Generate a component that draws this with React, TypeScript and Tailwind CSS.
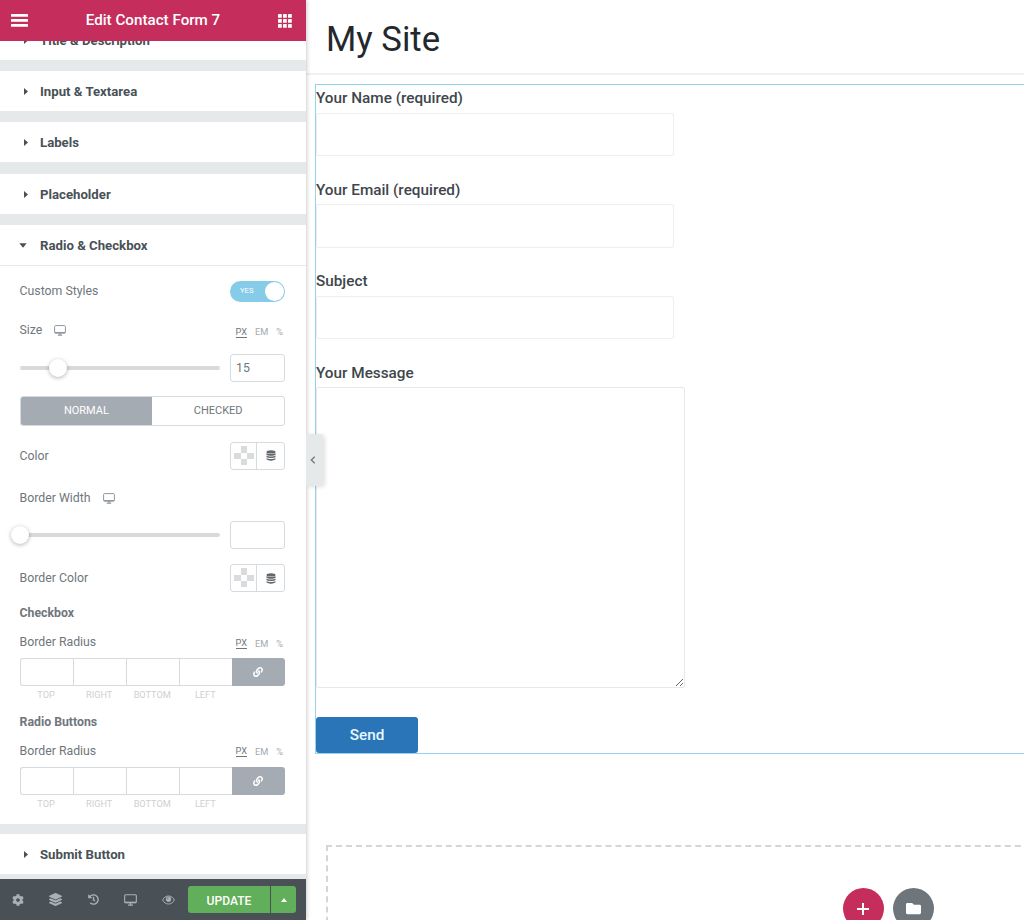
import type { ReactNode } from 'react'
import { FaCog, FaFolder, FaHistory, FaLayerGroup, FaLink } from 'react-icons/fa'

function DesktopIcon({ className }: { className: string }) {
  return (
    <svg viewBox="0 0 12 11" className={className} fill="none" stroke="currentColor">
      <rect x="0.6" y="0.6" width="10.8" height="7.4" rx="0.9" strokeWidth="1" />
      <path d="M0.8 7.7h10.4" strokeWidth="1.4" />
      <path d="M6 8v2M3.8 10.2h4.4" strokeWidth="1.2" />
    </svg>
  )
}

function DatabaseIcon() {
  return (
    <svg viewBox="0 0 10 11" className="h-[11px] w-[10px]" fill="#60676d">
      <ellipse cx="5" cy="1.9" rx="4.5" ry="1.7" />
      <path d="M.5 3.1c1.600 1.300 7.400 1.300 9 0v1.600c-1.600 1.300-7.400 1.300-9 0zM.5 5.500c1.600 1.300 7.400 1.300 9 0v1.600c-1.600 1.300-7.400 1.300-9 0zM.5 7.900c1.600 1.300 7.400 1.300 9 0v1.400c-1.600 1.800-7.400 1.800-9 0z" />
    </svg>
  )
}

function EyeIcon() {
  return (
    <svg viewBox="0 0 13 10" className="h-[10px] w-[13px]" fill="none" stroke="currentColor">
      <path d="M.6 5C2 2.3 4 1 6.500 1S11 2.300 12.400 5C11 7.700 9 9 6.500 9S2 7.700.6 5z" strokeWidth="1" />
      <circle cx="6.500" cy="4.300" r="2.700" fill="currentColor" stroke="none" />
      <path d="M5.200 4.200c0-.8.5-1.300 1.300-1.300" stroke="#495157" strokeWidth=".7" />
    </svg>
  )
}

function SectionTitle({ title, open = false }: { title: string; open?: boolean }) {
  return (
    <div className="flex h-[40px] shrink-0 items-center bg-white pl-[19px]">
      <span className="flex w-[21px] shrink-0">
        {open ? (
          <svg viewBox="0 0 8 5" className="h-[5px] w-[8px]" fill="#495157">
            <path d="M.3.3h7.400L4 4.700z" />
          </svg>
        ) : (
          <svg viewBox="0 0 4 7" className="ml-[5px] h-[7px] w-[4px]" fill="#495157">
            <path d="M0 0v7l4-3.500z" />
          </svg>
        )}
      </span>
      <h2 className="pt-px text-[13.2px] font-bold text-[#495157]">{title}</h2>
    </div>
  )
}

function Units() {
  return (
    <div className="flex items-center gap-[8px] pr-[2px] text-[9.2px] leading-[10px] text-[#a4a9ad]">
      <span className="border-b border-[#6f767c] text-[#6f767c]">PX</span>
      <span>EM</span>
      <span>%</span>
    </div>
  )
}

function Slider({ value, position }: { value: string; position: number }) {
  return (
    <>
      <div className="relative h-[4px] w-[200px] rounded-full bg-[#d8d9da]">
        <span
          className="absolute top-[-7px] h-[18px] w-[18px] -translate-x-1/2 rounded-full bg-white shadow-[0_1px_4px_rgba(0,0,0,0.3)]"
          style={{ left: position }}
        />
      </div>
      <div className="flex h-[28px] w-[55px] items-center rounded-[3px] border border-[#d5dadf] pt-px pl-[5px] text-[12.3px] text-[#6f767c]">
        {value}
      </div>
    </>
  )
}

function ColorPicker() {
  return (
    <div className="flex h-[28px] w-[55px] rounded-[3px] border border-[#d5dadf]">
      <div className="flex flex-1 items-center justify-center border-r border-[#d5dadf]">
        <svg viewBox="0 0 20 20" className="h-[20px] w-[20px]" fill="#d9dbdc">
          <path d="M7 0h6v7H7zM0 7h7v6H0zM13 7h7v6h-7zM7 13h6v6H7z" />
        </svg>
      </div>
      <div className="flex w-[27px] items-center justify-center">
        <DatabaseIcon />
      </div>
    </div>
  )
}

function Row({ className, children }: { className: string; children: ReactNode }) {
  return <div className={`flex items-center justify-between ${className}`}>{children}</div>
}

function Dimensions() {
  return (
    <div className="grid grid-cols-5 text-center">
      {['TOP', 'RIGHT', 'BOTTOM', 'LEFT'].map((side, i) => (
        <div key={side}>
          <div
            className={`h-[28px] border-y border-l border-[#d5dadf] ${i === 0 ? 'rounded-l-[3px]' : ''}`}
          />
          <p className="text-[9.2px] leading-[18px] text-[#cdd0d3]">{side}</p>
        </div>
      ))}
      <div className="flex h-[28px] items-center justify-center rounded-r-[3px] bg-[#a4abb3] text-white">
        <FaLink className="h-[10px] w-[10px]" />
      </div>
    </div>
  )
}

function RadioCheckboxControls() {
  return (
    <div className="h-[559px] border-t border-[#e6e9ec] bg-white pr-[21px] pl-[19.5px] text-[12.3px] text-[#6f767c]">
      <Row className="h-[50px]">
        <span className="pt-px">Custom Styles</span>
        <div className="flex h-[21px] w-[55px] items-center justify-between rounded-full bg-[#86cbe8] pr-px pl-[10px] text-[7.7px] text-white">
          YES
          <span className="h-[19px] w-[19px] rounded-full bg-white" />
        </div>
      </Row>
      <Row className="h-[28px]">
        <span className="flex items-center gap-[12px]">
          Size
          <DesktopIcon className="h-[11px] w-[12px] text-[#8f979f]" />
        </span>
        <div className="pt-[4px]">
          <Units />
        </div>
      </Row>
      <Row className="h-[47px]">
        <Slider value="15" position={38} />
      </Row>
      <div className="mt-[5px] flex h-[30px] overflow-hidden rounded-[3px] border border-[#d5dadf] text-[11px]">
        <div className="flex flex-1 items-center justify-center bg-[#a4abb3] pt-px text-white">NORMAL</div>
        <div className="flex flex-1 items-center justify-center pt-px">CHECKED</div>
      </div>
      <Row className="h-[59px]">
        <span className="pt-px">Color</span>
        <ColorPicker />
      </Row>
      <Row className="h-[25px]">
        <span className="flex items-center gap-[12px] pt-px">
          Border Width
          <DesktopIcon className="h-[11px] w-[12px] text-[#8f979f]" />
        </span>
      </Row>
      <Row className="h-[50px]">
        <Slider value="" position={0} />
      </Row>
      <Row className="h-[36px]">
        <span className="pt-px">Border Color</span>
        <ColorPicker />
      </Row>
      <Row className="h-[34px] pt-px font-bold">Checkbox</Row>
      <Row className="mb-[4px] h-[24px]">
        <span>Border Radius</span>
        <div className="pt-[3px]">
          <Units />
        </div>
      </Row>
      <Dimensions />
      <Row className="h-[35px] pt-px font-bold">Radio Buttons</Row>
      <Row className="mb-[5px] h-[23px]">
        <span className="pt-px">Border Radius</span>
        <div className="pt-[2px]">
          <Units />
        </div>
      </Row>
      <Dimensions />
    </div>
  )
}

function PanelFooter() {
  return (
    <footer className="flex h-[41px] shrink-0 items-center bg-[#495157] text-[#a9b1b8]">
      <div className="flex w-[188px] items-center justify-between pr-[13px] pl-[12px]">
        <FaCog className="h-[12px] w-[12px]" />
        <FaLayerGroup className="h-[13px] w-[13px]" />
        <FaHistory className="h-[11px] w-[11px]" />
        <DesktopIcon className="h-[12px] w-[13px]" />
        <EyeIcon />
      </div>
      <button className="h-[27px] w-[82px] rounded-l-[3px] bg-[#61ae5b] pt-[3px] text-[12.1px] font-medium text-white">
        UPDATE
      </button>
      <button className="ml-px flex h-[27px] w-[25px] items-center justify-center rounded-r-[3px] bg-[#61ae5b] pt-px">
        <svg viewBox="0 0 6 4" className="h-[4px] w-[6px]" fill="white">
          <path d="M0 4h6L3 0z" />
        </svg>
      </button>
    </footer>
  )
}

function EditorPanel() {
  return (
    <aside className="relative z-10 flex w-[306px] shrink-0 flex-col bg-[#e6e9ea] shadow-[1px_0_4px_rgba(0,0,0,0.2)]">
      <header className="z-10 flex h-[41px] shrink-0 items-center justify-between bg-[#c42d5c] pr-[14px] pl-[11px] text-white">
        <svg viewBox="0 0 17 13" className="h-[13px] w-[17px]" fill="currentColor">
          <rect width="17" height="2.800" rx=".6" />
          <rect y="5" width="17" height="2.800" rx=".6" />
          <rect y="10" width="17" height="2.800" rx=".6" />
        </svg>
        <h1 className="pb-px text-[15.2px] font-medium">Edit Contact Form 7</h1>
        <svg viewBox="0 0 14 14" className="h-[14px] w-[14px]" fill="currentColor">
          {[0, 5, 10].map((y) =>
            [0, 5, 10].map((x) => <rect key={`${x}-${y}`} x={x} y={y} width="3.800" height="3.800" rx=".4" />),
          )}
        </svg>
      </header>
      <div className="flex min-h-0 flex-1 flex-col overflow-hidden">
        <div className="-mt-[21px] flex flex-col gap-[11px]">
          <SectionTitle title="Title & Description" />
          <SectionTitle title="Input & Textarea" />
          <SectionTitle title="Labels" />
          <div className="mt-px">
            <SectionTitle title="Placeholder" />
          </div>
          <div>
            <SectionTitle title="Radio & Checkbox" open />
            <RadioCheckboxControls />
          </div>
          <div className="-mt-px">
            <SectionTitle title="Submit Button" />
          </div>
        </div>
      </div>
      <PanelFooter />
      <button className="absolute top-[434px] left-[306px] flex h-[52px] w-[17px] items-center rounded-r-[3px] bg-[#e6e9ea] pl-[4px] shadow-[2px_1px_4px_rgba(0,0,0,0.12)]">
        <svg viewBox="0 0 6 8" className="h-[8px] w-[6px]" fill="none" stroke="#6d7882" strokeWidth="1.300">
          <path d="M4.700.7 1.300 4l3.400 3.300" />
        </svg>
      </button>
    </aside>
  )
}

function Field({ label }: { label: string }) {
  return (
    <label className="mb-[20.4px] block">
      <span className="block h-[27.6px] leading-[27px]">{label}</span>
      <input className="block h-[43.6px] w-[358px] rounded-[2px] border border-[#eeeeee] bg-white" />
    </label>
  )
}

function Preview() {
  return (
    <main className="flex min-w-0 flex-1 flex-col overflow-hidden">
      <header className="h-[75px] shrink-0 border-b-2 border-[#f1f1f1] pt-[19px] pl-[20px]">
        <h1 className="text-[34.7px] leading-[40px] text-[#23282c]">My Site</h1>
      </header>
      <form className="mt-[9px] ml-[9px] h-[670px] shrink-0 border border-r-0 border-[#93d3ee] text-[15.3px] font-medium text-[#40464b]">
        <Field label="Your Name (required)" />
        <Field label="Your Email (required)" />
        <Field label="Subject" />
        <label className="block">
          <span className="block h-[27.6px] leading-[27px]">Your Message</span>
          <textarea className="block h-[300.4px] w-[369px] resize rounded-[2px] border border-[#e8e8e8] bg-white" />
        </label>
        <button
          type="button"
          className="mt-[29.5px] block h-[36px] w-[102px] rounded-[3px] bg-[#2a74b8] text-[#e8f7ff]"
        >
          Send
        </button>
      </form>
      <div className="mt-[91px] -mr-[426px] ml-[20px] flex h-[160px] shrink-0 justify-center gap-[9px] border-2 border-dashed border-[#d5d5d5] pt-[41px] text-white">
        <div className="flex h-[41px] w-[41px] items-center justify-center rounded-full bg-[#c42d5c]">
          <svg viewBox="0 0 12 12" className="h-[12px] w-[12px]" stroke="currentColor" strokeWidth="2">
            <path d="M6 .5v11M.5 6h11" strokeLinecap="round" />
          </svg>
        </div>
        <div className="flex h-[41px] w-[41px] items-center justify-center rounded-full bg-[#6e767b]">
          <FaFolder className="h-[15px] w-[15px]" />
        </div>
      </div>
    </main>
  )
}

export default function App() {
  return (
    <div className="flex h-[920px] w-[1024px] overflow-hidden bg-white font-[Roboto,sans-serif]">
      <EditorPanel />
      <Preview />
    </div>
  )
}
